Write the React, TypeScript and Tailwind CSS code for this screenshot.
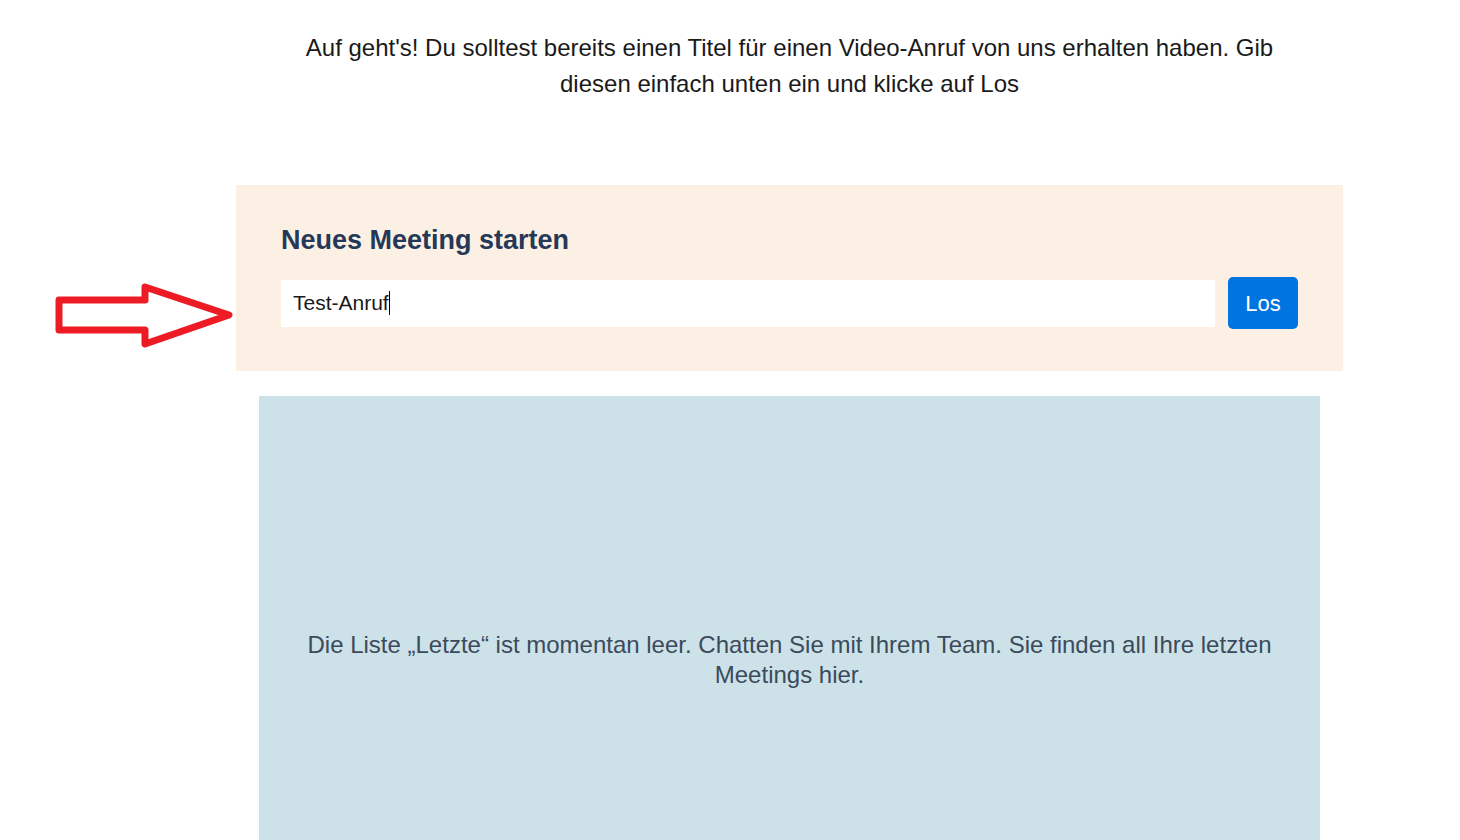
import React from "react";

export default function App() {
  return (
    <div className="relative w-[1460px] h-[840px] overflow-hidden bg-white" style={{ fontFamily: '"Liberation Sans", Arial, sans-serif' }}>
      <div className="ml-[236px] w-[1107px] flex flex-col">
        <p className="mt-[30px] px-[40px] text-center text-[24px] leading-[36px] text-[#1a1a1a]">
          Auf geht's! Du solltest bereits einen Titel für einen Video-Anruf von uns erhalten haben. Gib diesen einfach unten ein und klicke auf Los
        </p>
        <div className="mt-[83px] h-[186px] bg-[#fcf0e4] px-[45px] pt-[39px]">
          <h2 className="text-[27px] leading-[32px] font-bold text-[#253858]">Neues Meeting starten</h2>
          <div className="mt-[21px] flex items-center gap-[13px]">
            <div className="flex-1 h-[47px] bg-white flex items-center pl-[12px] text-[21px] text-[#1a1a1a]">
              <span>Test-Anruf</span>
              <span className="w-[1px] h-[24px] bg-black"></span>
            </div>
            <button className="w-[70px] h-[52px] rounded-[5px] bg-[#0074e0] text-white text-[22px]">Los</button>
          </div>
        </div>
        <div className="mx-[23px] mt-[25px] h-[460px] bg-[#cce2e8] flex flex-col items-center pt-[234px] px-[40px]">
          <p className="text-center text-[24px] leading-[30px] text-[#3c4a5c]">
            Die Liste „Letzte“ ist momentan leer. Chatten Sie mit Ihrem Team. Sie finden all Ihre letzten Meetings hier.
          </p>
        </div>
      </div>
      <svg className="absolute left-0 top-0" width="260" height="400">
        <polygon
          points="59,300 145,300 145,287 229,315 145,344 145,330 59,330"
          fill="none"
          stroke="#ed1c24"
          strokeWidth="7"
          strokeLinejoin="round"
        />
      </svg>
    </div>
  );
}
